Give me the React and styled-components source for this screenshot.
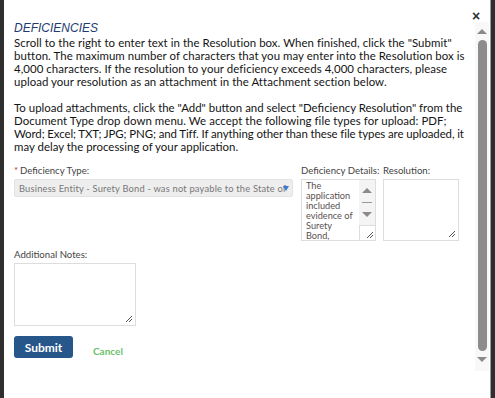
import React from "react";
import styled, { createGlobalStyle } from "styled-components";

const Global = createGlobalStyle`
  html, body { margin: 0; padding: 0; }
  body { background: #2e2e2e; width: 495px; height: 398px; overflow: hidden; }
  #root { height: 398px; }
`;

const Page = styled.div`
  display: flex;
  height: 398px;
  padding-left: 4px;
  box-sizing: border-box;
`;

const Dialog = styled.div`
  position: relative;
  display: flex;
  width: 487px;
  height: 398px;
  background: #fff;
  border-right: 1px solid #9a9a9a;
  box-sizing: border-box;
`;

const Close = styled.div`
  position: absolute;
  top: 8px;
  left: 468px;
  font: bold 14px "Liberation Sans", Arial, sans-serif;
  color: #333;
`;

const Content = styled.div`
  flex: 1;
  min-width: 0;
  padding: 20px 6px 0 10px;
  font-family: Lato, "Liberation Sans", sans-serif;
  color: #141414;
`;

const Heading = styled.div`
  font: italic 12px "Liberation Sans", Arial, sans-serif;
  color: #1d3b70;
  line-height: 16px;
`;

const Para = styled.div`
  font-size: 11.45px;
  line-height: 13px;
`;

const Line = styled.div`
  white-space: nowrap;
  height: 13px;
  letter-spacing: ${(p) => p.$ls || 0}px;
`;

const Row = styled.div`
  display: flex;
  align-items: flex-start;
  margin-top: ${(p) => p.$mt}px;
`;

const Field = styled.div`
  display: flex;
  flex-direction: column;
  width: ${(p) => p.$w}px;
  margin-right: ${(p) => p.$mr || 0}px;
`;

const Label = styled.div`
  font-size: 9.6px;
  line-height: 12px;
  color: #444;
  margin-bottom: 2px;
  white-space: nowrap;
`;

const Req = styled.span`
  color: #c0392b;
  margin-right: 2px;
`;

const Select = styled.div`
  display: flex;
  align-items: center;
  width: 279px;
  height: 18px;
  box-sizing: border-box;
  background: #eee;
  border: 1px solid #e2e2e2;
  border-radius: 2px;
  padding-left: 4px;
  font-size: 9.3px;
  letter-spacing: 0.2px;
  color: #777;
  white-space: nowrap;
  overflow: hidden;
`;

const SelectText = styled.span`
  overflow: hidden;
  width: 270px;
`;

const Caret = styled.span`
  width: 0;
  height: 0;
  border-left: 3.5px solid transparent;
  border-right: 3.5px solid transparent;
  border-top: 5px solid #3a7bd5;
  margin-left: -6px;
`;

const Box = styled.div`
  position: relative;
  display: flex;
  width: ${(p) => p.$w}px;
  height: ${(p) => p.$h}px;
  box-sizing: border-box;
  border: 1px solid #ddd;
  background: #fff;
  overflow: hidden;
`;

const BoxText = styled.div`
  flex: 1;
  padding: 1px 0 0 4px;
  font-size: 9.2px;
  line-height: 10px;
  color: #5a5050;
  white-space: nowrap;
`;

const Bar = styled.div`
  width: 16px;
  display: flex;
  flex-direction: column;
  align-items: center;
  background: #f4f4f4;
`;

const Tri = styled.div`
  width: 0;
  height: 0;
  border-left: 5px solid transparent;
  border-right: 5px solid transparent;
  ${(p) => (p.$up ? "border-bottom: 5px solid #8a8a8a;" : "border-top: 5px solid #8a8a8a;")}
  margin-top: ${(p) => p.$mt}px;
  margin-bottom: ${(p) => p.$mb || 0}px;
`;

const Dash = styled.div`
  width: 10px;
  height: 1px;
  background: #999;
  margin-top: 9px;
`;

const Corner = styled.div`
  margin-top: auto;
  width: 16px;
  height: 15px;
  border-top: 1px solid #ddd;
  border-left: 1px solid #ddd;
  background: #fff;
  box-sizing: border-box;
  position: relative;
`;

const Grip = styled.svg`
  position: absolute;
  right: ${(p) => p.$r || 1}px;
  bottom: ${(p) => p.$b || 1}px;
`;

const Buttons = styled.div`
  display: flex;
  align-items: flex-start;
  margin-top: 10px;
`;

const Submit = styled.button`
  width: 59px;
  height: 22px;
  background: #26568a;
  color: #fff;
  border: none;
  border-radius: 3px;
  font: bold 12px Lato, "Liberation Sans", sans-serif;
  padding: 0;
`;

const Cancel = styled.span`
  margin-left: 20px;
  margin-top: 9px;
  font: bold 10px Lato, "Liberation Sans", sans-serif;
  line-height: 12px;
  color: #6cbf6c;
`;

const Scroll = styled.div`
  flex-shrink: 0;
  width: 14px;
  margin: 22px 1px 27px 0;
  background: #f8f8f8;
  display: flex;
  flex-direction: column;
  align-items: center;
`;

const Thumb = styled.div`
  width: 9px;
  flex: 1;
  margin: 6px 0 6px 1px;
  background: #8c8c8c;
  border-radius: 5px;
`;

const GripIcon = (props) => (
  <Grip width="8" height="8" viewBox="0 0 8 8" {...props}>
    <path d="M7 1 L1 7 M7 4 L4 7" stroke="#555" strokeWidth="1" fill="none" />
  </Grip>
);

const para1 = [
  ['Scroll to the right to enter text in the Resolution box. When finished, click the "Submit"', 0.05],
  ["button. The maximum number of characters that you may enter into the Resolution box is", 0.05],
  ["4,000 characters. If the resolution to your deficiency exceeds 4,000 characters, please", 0.05],
  ["upload your resolution as an attachment in the Attachment section below.", 0.05],
];
const para2 = [
  ['To upload attachments, click the "Add" button and select "Deficiency Resolution" from the', 0],
  ["Document Type drop down menu. We accept the following file types for upload: PDF;", 0.05],
  ["Word; Excel; TXT; JPG; PNG; and Tiff. If anything other than these file types are uploaded, it", -0.1],
  ["may delay the processing of your application.", 0],
];

export default function App() {
  return (
    <>
      <Global />
      <Page>
        <Dialog>
          <Close>×</Close>
          <Content>
            <Heading>DEFICIENCIES</Heading>
            <Para>
              {para1.map(([l, ls]) => (
                <Line key={l} $ls={ls}>{l}</Line>
              ))}
              <Line />
              {para2.map(([l, ls]) => (
                <Line key={l} $ls={ls}>{l}</Line>
              ))}
            </Para>
            <Row $mt={12}>
              <Field $w={279} $mr={8}>
                <Label>
                  <Req>*</Req>Deficiency Type:
                </Label>
                <Select>
                  <SelectText>Business Entity - Surety Bond - was not payable to the State of Colorado</SelectText>
                  <Caret />
                </Select>
              </Field>
              <Field $w={75} $mr={7}>
                <Label>Deficiency Details:</Label>
                <Box $w={75} $h={62}>
                  <BoxText>
                    The
                    <br />
                    application
                    <br />
                    included
                    <br />
                    evidence of
                    <br />
                    Surety
                    <br />
                    Bond,
                  </BoxText>
                  <Bar>
                    <Tri $up $mt={8} />
                    <Dash />
                    <Tri $mt={9} />
                    <Corner>
                      <GripIcon />
                    </Corner>
                  </Bar>
                </Box>
              </Field>
              <Field $w={76}>
                <Label>Resolution:</Label>
                <Box $w={76} $h={62}>
                  <GripIcon $r={2} $b={2} />
                </Box>
              </Field>
            </Row>
            <Row $mt={8}>
              <Field $w={122}>
                <Label>Additional Notes:</Label>
                <Box $w={122} $h={63}>
                  <GripIcon $r={2} $b={2} />
                </Box>
              </Field>
            </Row>
            <Buttons>
              <Submit>Submit</Submit>
              <Cancel>Cancel</Cancel>
            </Buttons>
          </Content>
          <Scroll>
            <Tri $up $mt={7} />
            <Thumb />
            <Tri $mt={0} $mb={9} />
          </Scroll>
        </Dialog>
      </Page>
    </>
  );
}
